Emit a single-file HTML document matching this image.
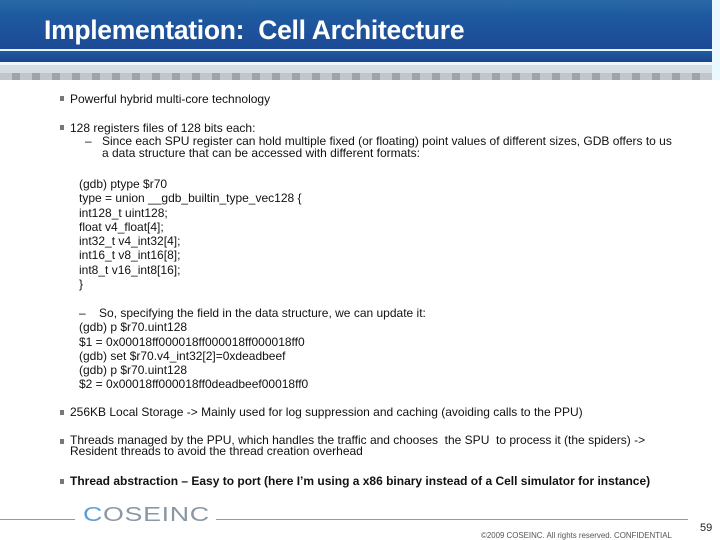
<!DOCTYPE html>
<html><head><style>
body{margin:0;width:720px;height:540px;background:#fff;position:relative;overflow:hidden;font-family:"Liberation Sans",sans-serif;color:#111}
.t{position:absolute;font-size:12px;white-space:nowrap;line-height:12px}
.b{position:absolute;left:60px;width:4px;height:5px;background:#777}
</style></head><body>
<div style="position:absolute;left:0;top:0;width:712px;height:49px;background:linear-gradient(#2a6aa8,#1e5aa0 30%,#1d4a96)"></div>
<div style="position:absolute;left:0;top:49px;width:712px;height:2px;background:#e8f4ff"></div>
<div style="position:absolute;left:0;top:51px;width:712px;height:11px;background:linear-gradient(#1f5c9e,#1b4590)"></div>
<div style="position:absolute;left:0;top:62px;width:712px;height:3px;background:#eef6fb"></div>
<div style="position:absolute;left:0;top:65px;width:712px;height:8px;background:#d4dde2"></div>
<div style="position:absolute;left:0;top:73px;width:712px;height:7px;background:repeating-linear-gradient(90deg,#c2c6ca 0 12px,#9ea3a8 12px 20px)"></div>
<div style="position:absolute;left:712px;top:0;width:8px;height:80px;background:#eaf8ff"></div>
<div style="position:absolute;left:44px;top:15px;color:#fff;font-size:26.5px;font-weight:bold;letter-spacing:-0.3px">Implementation:&nbsp; Cell Architecture</div>

<div class="b" style="top:96px"></div><div class="t" style="left:70px;top:93px">Powerful hybrid multi-core technology</div>
<div class="b" style="top:125px"></div><div class="t" style="left:70px;top:122px">128 registers files of 128 bits each:</div>
<div class="t" style="left:85px;top:135px">–</div>
<div class="t" style="left:102px;top:135px">Since each SPU register can hold multiple fixed (or floating) point values of different sizes, GDB offers to us</div>
<div class="t" style="left:102px;top:147px">a data structure that can be accessed with different formats:</div>
<div class="t" style="left:79px;top:177px;line-height:14.3px">(gdb) ptype $r70<br>type = union __gdb_builtin_type_vec128 {<br>int128_t uint128;<br>float v4_float[4];<br>int32_t v4_int32[4];<br>int16_t v8_int16[8];<br>int8_t v16_int8[16];<br>}</div>
<div class="t" style="left:79px;top:306px;line-height:14.3px">–&nbsp;&nbsp;&nbsp; So, specifying the field in the data structure, we can update it:<br>(gdb) p $r70.uint128<br>$1 = 0x00018ff000018ff000018ff000018ff0<br>(gdb) set $r70.v4_int32[2]=0xdeadbeef<br>(gdb) p $r70.uint128<br>$2 = 0x00018ff000018ff0deadbeef00018ff0</div>
<div class="b" style="top:410px"></div><div class="t" style="left:70px;top:406px">256KB Local Storage -&gt; Mainly used for log suppression and caching (avoiding calls to the PPU)</div>
<div class="b" style="top:439px"></div><div class="t" style="left:70px;top:435px;line-height:11px">Threads managed by the PPU, which handles the traffic and chooses&nbsp; the SPU&nbsp; to process it (the spiders) -&gt;<br>Resident threads to avoid the thread creation overhead</div>
<div class="b" style="top:479px"></div><div class="t" style="left:70px;top:475px;font-weight:bold">Thread abstraction – Easy to port (here I’m using a x86 binary instead of a Cell simulator for instance)</div>

<div style="position:absolute;left:0;top:519px;width:75px;height:1px;background:#999"></div>
<div style="position:absolute;left:216px;top:519px;width:472px;height:1px;background:#999"></div>
<div style="position:absolute;left:83px;top:504px;font-size:20px;color:#8a98a6;letter-spacing:0.5px;line-height:22px;transform:scaleX(1.34);transform-origin:0 0"><span style="color:#5aa0d8">C</span>OSEINC</div>
<div style="position:absolute;left:481px;top:531px;font-size:7.9px;color:#555;line-height:9px">©2009 COSEINC. All rights reserved. CONFIDENTIAL</div>
<div style="position:absolute;left:700px;top:522px;font-size:11px;color:#222">59</div>
</body></html>
